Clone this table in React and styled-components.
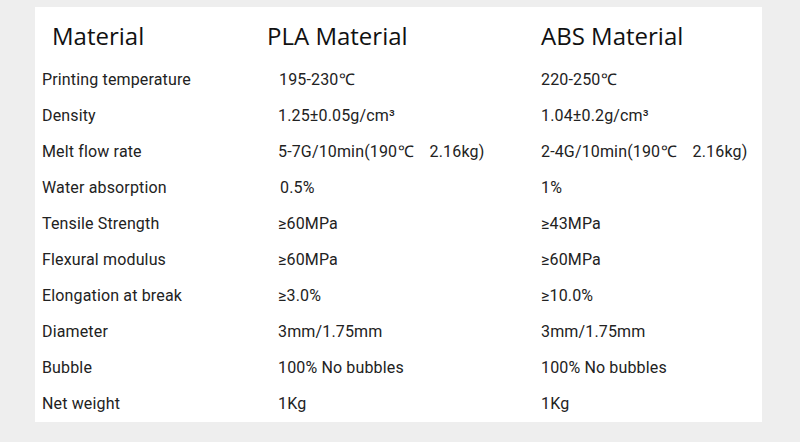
import styled, { createGlobalStyle } from "styled-components";

const GlobalStyle = createGlobalStyle`
  html, body { margin: 0; padding: 0; background: #eeeeee; }
  body { font-family: Roboto, "Liberation Sans", Arial, sans-serif; }
`;

// ── Layout ───────────────────────────────────────────────────
const Page = styled.div`
  width: 800px;
  height: 442px;
  padding: 7px 0 0 35px;
  box-sizing: border-box;
`;

const Panel = styled.div`
  width: 727px;
  height: 415px;
  background: #ffffff;
  padding-left: 7px;
  box-sizing: border-box;
`;

const Row = styled.div`
  display: grid;
  grid-template-columns: 236px 263px 1fr;
  align-items: center;
  height: ${({ $head }) => ($head ? "54px" : "36px")};
  padding-top: ${({ $head }) => ($head ? "2px" : "0")};
  box-sizing: border-box;
`;

const HeadCell = styled.div`
  font-family: "Open Sans", "Noto Sans", sans-serif;
  font-size: 24px;
  color: #111;
  margin-left: ${({ $indent }) => $indent || 0}px;
  white-space: nowrap;
`;

const Cell = styled.div`
  font-family: Roboto, "Liberation Sans", Arial, sans-serif;
  font-size: 16px;
  letter-spacing: 0.15px;
  color: #222;
  margin-left: ${({ $indent }) => $indent || 0}px;
  white-space: pre;
`;

// the degree sign sits a little apart from its neighbours
const Deg = styled.span`
  margin: 0 ${({ $gap }) => $gap}px 0 1px;
`;

const rows = [
  ["Printing temperature", "195-230℃", "220-250℃", 1],
  ["Density", "1.25±0.05g/cm³", "1.04±0.2g/cm³", 0],
  ["Melt flow rate", "5-7G/10min(190℃  2.16kg)", "2-4G/10min(190℃  2.16kg)", 0],
  ["Water absorption", "0.5%", "1%", 2],
  ["Tensile Strength", "≥60MPa", "≥43MPa", 0],
  ["Flexural modulus", "≥60MPa", "≥60MPa", 0],
  ["Elongation at break", "≥3.0%", "≥10.0%", 0],
  ["Diameter", "3mm/1.75mm", "3mm/1.75mm", 0],
  ["Bubble", "100% No bubbles", "100% No bubbles", 0],
  ["Net weight", "1Kg", "1Kg", 0],
];

const Value = ({ text }) => {
  const parts = text.split("℃");
  if (parts.length === 1) return text;
  return (
    <>
      {parts[0]}
      <Deg $gap={parts[1] ? 7 : 0}>℃</Deg>
      {parts[1]}
    </>
  );
};

export default function App() {
  return (
    <>
      <GlobalStyle />
      <Page>
        <Panel>
          <Row $head>
            <HeadCell $indent={10}>Material</HeadCell>
            <HeadCell $indent={-11}>PLA Material</HeadCell>
            <HeadCell>ABS Material</HeadCell>
          </Row>
          {rows.map(([label, pla, abs, shift]) => (
            <Row key={label}>
              <Cell>{label}</Cell>
              <Cell $indent={shift}>
                <Value text={pla} />
              </Cell>
              <Cell>
                <Value text={abs} />
              </Cell>
            </Row>
          ))}
        </Panel>
      </Page>
    </>
  );
}
